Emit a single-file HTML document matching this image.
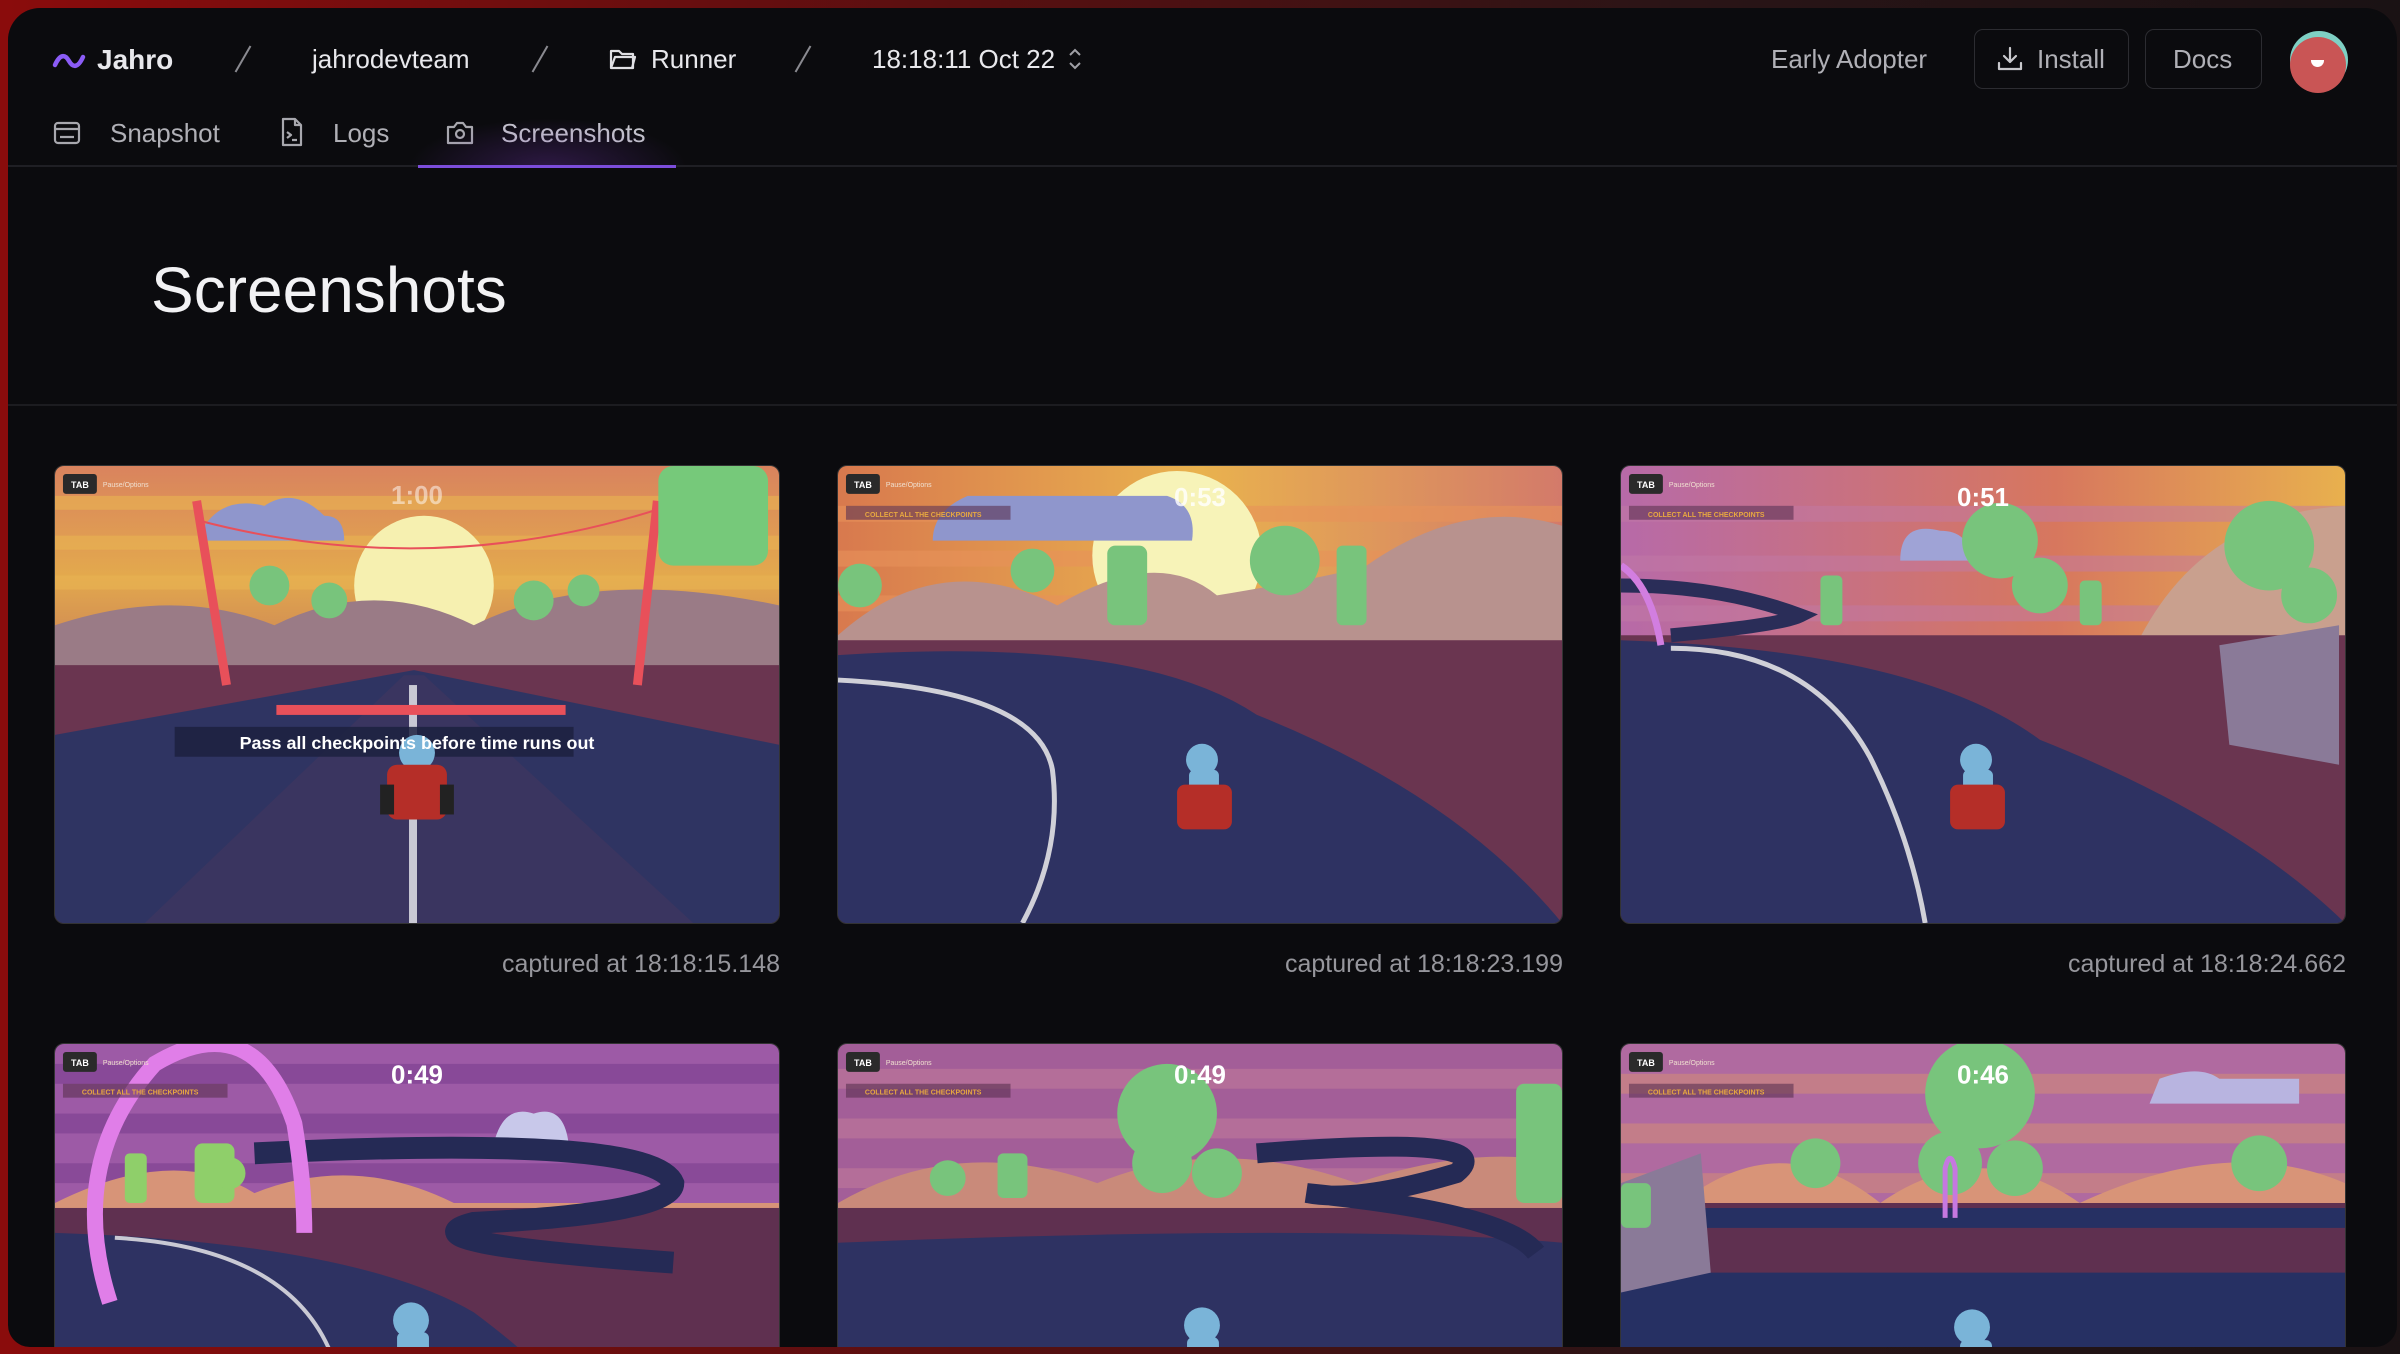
<!DOCTYPE html>
<html><head><meta charset="utf-8">
<style>
*{margin:0;padding:0;box-sizing:border-box}
html,body{width:2400px;height:1354px;overflow:hidden}
body{background:linear-gradient(90deg,#8a0c0c 0%,#5a0f10 40%,#2a1416 70%,#1a1214 100%);font-family:"Liberation Sans",sans-serif;position:relative}
.win{position:absolute;left:8px;top:8px;width:2389px;height:1339px;background:#0b0b0e;border-radius:32px 32px 22px 22px;overflow:hidden}
.t{position:absolute;color:#e8e8ec;font-size:26px;line-height:1;white-space:nowrap}
.g{color:#b0b0b6}
.sl{position:absolute;width:2px;height:30px;background:#8a8a90;transform:rotate(30deg)}
.btn{position:absolute;top:21px;height:60px;border:1.5px solid #2c2c31;border-radius:9px}
.hr{position:absolute;left:0;right:0;height:2px;background:#1f1f24}
.card{position:absolute;width:726px;height:459px;border-radius:10px;overflow:hidden;border:1px solid #333}
.card svg{display:block;width:100%;height:100%}
.cap{position:absolute;width:726px;text-align:right;color:#96969c;font-size:25px}
</style></head><body>
<div class="win">
<svg style="position:absolute;left:44px;top:43px" width="34" height="20" viewBox="0 0 34 20"><path d="M3 14 C8 3,13 3,17 10 S26 17,31 6" stroke="#8b5cf6" stroke-width="4.5" fill="none" stroke-linecap="round"/></svg>
<div class="t" style="left:89px;top:38px;font-weight:700;font-size:28px">Jahro</div>
<div class="sl" style="left:234px;top:36px"></div>
<div class="t" style="left:304px;top:38px">jahrodevteam</div>
<div class="sl" style="left:531px;top:36px"></div>
<svg style="position:absolute;left:601px;top:39px" width="28" height="24" viewBox="0 0 28 24" fill="none" stroke="#e0e0e4" stroke-width="2.2" stroke-linejoin="round"><path d="M2 4h8l3 3h11v14H2z"/><path d="M2 21l4-11h20l-3 11"/></svg>
<div class="t" style="left:643px;top:38px">Runner</div>
<div class="sl" style="left:794px;top:36px"></div>
<div class="t" style="left:864px;top:38px">18:18:11 Oct 22</div>
<svg style="position:absolute;left:1059px;top:38px" width="16" height="26" viewBox="0 0 16 26" fill="none" stroke="#a0a0a6" stroke-width="2"><path d="M3 9l5-5 5 5M3 17l5 5 5-5"/></svg>
<div class="t g" style="left:1763px;top:38px">Early Adopter</div>
<div class="btn" style="left:1966px;width:155px"></div>
<svg style="position:absolute;left:1988px;top:37px" width="28" height="28" viewBox="0 0 28 28" fill="none" stroke="#c8c8cc" stroke-width="2.2" stroke-linecap="round" stroke-linejoin="round"><path d="M14 3v14M8 11l6 6 6-6M3 18v6h22v-6"/></svg>
<div class="t g" style="left:2029px;top:38px">Install</div>
<div class="btn" style="left:2137px;width:117px"></div>
<div class="t g" style="left:2165px;top:38px">Docs</div>
<div style="position:absolute;left:2282px;top:23px;width:58px;height:58px;border-radius:50%;background:#7fd0c4"></div>
<div style="position:absolute;left:2282px;top:29px;width:56px;height:56px;border-radius:50%;background:#c95555"></div>
<div style="position:absolute;left:2303px;top:52px;width:13px;height:7px;border-radius:0 0 7px 7px;background:#fff"></div>
<svg style="position:absolute;left:45px;top:112px" width="28" height="26" viewBox="0 0 28 26" fill="none" stroke="#a8a8ae" stroke-width="2.2"><rect x="2" y="3" width="24" height="20" rx="3"/><path d="M2 9h24M7 17h14"/></svg>
<div class="t g" style="left:102px;top:112px">Snapshot</div>
<svg style="position:absolute;left:272px;top:109px" width="24" height="30" viewBox="0 0 24 30" fill="none" stroke="#a8a8ae" stroke-width="2.2" stroke-linejoin="round"><path d="M3 2h12l6 6v20H3z"/><path d="M15 2v6h6M7 15l4 3-4 3M12 23h5"/></svg>
<div class="t g" style="left:325px;top:112px">Logs</div>
<svg style="position:absolute;left:437px;top:111px" width="30" height="28" viewBox="0 0 30 28" fill="none" stroke="#a8a8ae" stroke-width="2.2" stroke-linejoin="round"><path d="M3 8h6l3-4h6l3 4h6v16H3z"/><circle cx="15" cy="15" r="4"/></svg>
<div class="t" style="left:493px;top:112px;color:#c4c4cc">Screenshots</div>
<div style="position:absolute;left:400px;top:110px;width:280px;height:50px;background:radial-gradient(ellipse at 50% 100%,rgba(110,50,170,.35),transparent 70%)"></div>
<div class="hr" style="top:157px"></div>
<div style="position:absolute;left:410px;top:157px;width:258px;height:3px;background:#7c4ddb"></div>
<div class="t" style="left:143px;top:250px;font-size:64px;color:#f2f2f4">Screenshots</div>
<div class="hr" style="top:396px;background:#1c1c20"></div>

<div class="card" style="left:46px;top:457px"><svg viewBox="0 0 726 459" preserveAspectRatio="none">
<defs><linearGradient id="s1" x1="0" y1="0" x2="0" y2="1"><stop offset="0" stop-color="#d9835e"/><stop offset=".5" stop-color="#e3a94d"/><stop offset="1" stop-color="#c47858"/></linearGradient></defs>
<rect width="726" height="220" fill="url(#s1)"/>
<g fill="#e9b452" opacity=".6"><rect y="30" width="726" height="14"/><rect y="70" width="726" height="14"/><rect y="110" width="726" height="14"/></g>
<circle cx="370" cy="120" r="70" fill="#f6f0b0"/>
<path d="M150 60q20-30 60-20q30-20 60 10q20 0 20 25h-140z" fill="#8f96cc"/>
<path d="M0 160q120-40 220 0q100-50 200 0q120-60 306-20v80H0z" fill="#9a7b86"/>
<rect y="200" width="726" height="259" fill="#6a3550"/>
<path d="M0 270L360 205L726 280V459H0z" fill="#2f3462"/>
<path d="M90 459L350 210h20L640 459z" fill="#3a3560"/>
<rect x="355" y="220" width="8" height="239" fill="#c9c9d4"/>
<rect x="222" y="240" width="290" height="10" fill="#e8505a"/>
<path d="M142 35l30 185M604 35l-20 185" stroke="#e8505a" stroke-width="9"/>
<path d="M145 55q230 60 455-10" stroke="#e8505a" stroke-width="2" fill="none"/>
<rect x="605" y="0" width="110" height="100" rx="15" fill="#76c97a"/>
<g fill="#78c47c"><circle cx="215" cy="120" r="20"/><circle cx="275" cy="135" r="18"/><circle cx="480" cy="135" r="20"/><circle cx="530" cy="125" r="16"/></g>
<text x="363" y="38" text-anchor="middle" fill="#fff" opacity=".5" font-size="26" font-weight="700" font-family="Liberation Sans">1:00</text>
<rect x="120" y="262" width="400" height="30" fill="#1c2140" opacity=".85"/>
<circle cx="363" cy="288" r="18" fill="#7ab4d8"/><rect x="333" y="300" width="60" height="55" rx="10" fill="#b52e28"/><rect x="326" y="320" width="14" height="30" fill="#222"/><rect x="386" y="320" width="14" height="30" fill="#222"/>
<text x="363" y="284" text-anchor="middle" fill="#fff" font-size="18" font-weight="700" font-family="Liberation Sans">Pass all checkpoints before time runs out</text>
<rect x="8" y="8" width="34" height="20" rx="3" fill="#2a2a2a"/><text x="25" y="22" text-anchor="middle" fill="#fff" font-size="9" font-family="Liberation Sans" font-weight="700">TAB</text><text x="48" y="21" fill="#f0e0d0" font-size="7" font-family="Liberation Sans">Pause/Options</text>
</svg></div>

<div class="card" style="left:829px;top:457px"><svg viewBox="0 0 726 459" preserveAspectRatio="none">
<defs><linearGradient id="s2" x1="0" y1="0" x2="1" y2="0"><stop offset="0" stop-color="#d8794e"/><stop offset=".5" stop-color="#e9b24e"/><stop offset="1" stop-color="#d37a6a"/></linearGradient></defs>
<rect width="726" height="200" fill="url(#s2)"/>
<g fill="#e8925a" opacity=".6"><rect y="40" width="726" height="16"/><rect y="85" width="726" height="16"/><rect y="130" width="726" height="16"/></g>
<circle cx="340" cy="90" r="85" fill="#f7f3b8"/>
<path d="M130 30h200q30 10 25 45h-260q0-30 35-45z" fill="#8f96cc"/>
<path d="M0 170q100-90 220-30q100-60 160-10q120-20 150-30q100-70 196-40v120H0z" fill="#b8928e"/>
<rect y="175" width="726" height="284" fill="#6a3550"/>
<path d="M0 190q300-20 420 60q200 80 306 209H0z" fill="#2e3262"/>
<path d="M0 215q200 10 215 90q10 80-30 154" stroke="#d0d0d8" stroke-width="5" fill="none"/>
<g fill="#78c47c"><circle cx="195" cy="105" r="22"/><rect x="270" y="80" width="40" height="80" rx="8"/><circle cx="448" cy="95" r="35"/><circle cx="22" cy="120" r="22"/><rect x="500" y="80" width="30" height="80" rx="6"/></g>
<circle cx="365" cy="295" r="16" fill="#7ab4d8"/><rect x="352" y="305" width="30" height="35" rx="6" fill="#7ab4d8"/><rect x="340" y="320" width="55" height="45" rx="8" fill="#b52e28"/>
<text x="363" y="40" text-anchor="middle" fill="#fff" opacity=".8" font-size="26" font-weight="700" font-family="Liberation Sans">0:53</text>
<rect x="8" y="8" width="34" height="20" rx="3" fill="#2a2a2a"/><text x="25" y="22" text-anchor="middle" fill="#fff" font-size="9" font-family="Liberation Sans" font-weight="700">TAB</text><text x="48" y="21" fill="#f0e0d0" font-size="7" font-family="Liberation Sans">Pause/Options</text>
<rect x="8" y="40" width="165" height="14" fill="#5a3050" opacity=".6"/><text x="27" y="51" fill="#e8a840" font-size="7" font-family="Liberation Sans" font-weight="700">COLLECT ALL THE CHECKPOINTS</text>
</svg></div>

<div class="card" style="left:1612px;top:457px"><svg viewBox="0 0 726 459" preserveAspectRatio="none">
<defs><linearGradient id="s3" x1="0" y1="0" x2="1" y2="0"><stop offset="0" stop-color="#b76aa8"/><stop offset=".6" stop-color="#d7775e"/><stop offset="1" stop-color="#e8b04e"/></linearGradient></defs>
<rect width="726" height="200" fill="url(#s3)"/>
<g fill="#c27aa6" opacity=".5"><rect y="40" width="726" height="16"/><rect y="90" width="726" height="16"/><rect y="140" width="726" height="16"/></g>
<path d="M280 95q0-40 40-30q30 0 30 30h-70z" fill="#9fa3d6"/>
<path d="M500 220q60-170 226-180v180z" fill="#c9a08e"/>
<rect y="170" width="726" height="289" fill="#6a3550"/>
<path d="M0 175q300 10 420 100q200 80 306 184H0z" fill="#2e3262"/>
<path d="M0 120q100 0 180 30q-20 10-130 20" stroke="#2a2d58" stroke-width="14" fill="none"/>
<path d="M50 183q140 0 200 110q40 80 55 166" stroke="#d0d0d8" stroke-width="5" fill="none"/>
<path d="M0 100q30 20 40 80" stroke="#d27ee0" stroke-width="7" fill="none"/>
<g fill="#78c47c"><circle cx="380" cy="75" r="38"/><circle cx="420" cy="120" r="28"/><circle cx="650" cy="80" r="45"/><circle cx="690" cy="130" r="28"/><rect x="200" y="110" width="22" height="50" rx="5"/><rect x="460" y="115" width="22" height="45" rx="5"/></g>
<path d="M600 180l120-20v140l-110-20z" fill="#8a7a98"/>
<circle cx="356" cy="295" r="16" fill="#7ab4d8"/><rect x="343" y="305" width="30" height="35" rx="6" fill="#7ab4d8"/><rect x="330" y="320" width="55" height="45" rx="8" fill="#b52e28"/>
<text x="363" y="40" text-anchor="middle" fill="#fff" font-size="26" font-weight="700" font-family="Liberation Sans">0:51</text>
<rect x="8" y="8" width="34" height="20" rx="3" fill="#2a2a2a"/><text x="25" y="22" text-anchor="middle" fill="#fff" font-size="9" font-family="Liberation Sans" font-weight="700">TAB</text><text x="48" y="21" fill="#f0e0d0" font-size="7" font-family="Liberation Sans">Pause/Options</text>
<rect x="8" y="40" width="165" height="14" fill="#5a3050" opacity=".6"/><text x="27" y="51" fill="#e8a840" font-size="7" font-family="Liberation Sans" font-weight="700">COLLECT ALL THE CHECKPOINTS</text>
</svg></div>

<div class="cap" style="left:46px;top:942px">captured at 18:18:15.148</div>
<div class="cap" style="left:829px;top:942px">captured at 18:18:23.199</div>
<div class="cap" style="left:1612px;top:942px">captured at 18:18:24.662</div>

<div class="card" style="left:46px;top:1035px;height:320px"><svg viewBox="0 0 726 320" preserveAspectRatio="none">
<rect width="726" height="170" fill="#9d5aa6"/>
<g fill="#7b3f8f" opacity=".6"><rect y="20" width="726" height="20"/><rect y="70" width="726" height="20"/><rect y="120" width="726" height="20"/></g>
<path d="M440 100q10-40 40-30q30-10 35 30h20v15h-100z" fill="#c8c8ea"/>
<path d="M0 160q120-60 200-10q100-40 200 10h326v30H0z" fill="#d79478"/>
<rect y="165" width="726" height="155" fill="#5f3050"/>
<path d="M200 110q400-20 420 30q0 30-200 40q-80 20 200 40" stroke="#252a55" stroke-width="22" fill="none"/>
<path d="M0 190q300 10 420 80q40 30 60 50H0z" fill="#2e3262"/>
<path d="M60 195q180 10 220 125" stroke="#c9c9d4" stroke-width="4" fill="none"/>
<path d="M55 260Q10 120 100 20Q200-40 240 80q10 60 10 110" stroke="#e07ee8" stroke-width="16" fill="none"/>
<g fill="#8fcf6a"><rect x="140" y="100" width="40" height="60" rx="8"/><rect x="70" y="110" width="22" height="50" rx="5"/><circle cx="175" cy="130" r="16"/></g>
<circle cx="357" cy="278" r="18" fill="#7ab4d8"/><rect x="343" y="290" width="32" height="30" rx="6" fill="#7ab4d8"/>
<text x="363" y="40" text-anchor="middle" fill="#fff" font-size="26" font-weight="700" font-family="Liberation Sans">0:49</text>
<rect x="8" y="8" width="34" height="20" rx="3" fill="#2a2a2a"/><text x="25" y="22" text-anchor="middle" fill="#fff" font-size="9" font-family="Liberation Sans" font-weight="700">TAB</text><text x="48" y="21" fill="#f0e0d0" font-size="7" font-family="Liberation Sans">Pause/Options</text>
<rect x="8" y="40" width="165" height="14" fill="#5a3050" opacity=".6"/><text x="27" y="51" fill="#e8a840" font-size="7" font-family="Liberation Sans" font-weight="700">COLLECT ALL THE CHECKPOINTS</text>
</svg></div>

<div class="card" style="left:829px;top:1035px;height:320px"><svg viewBox="0 0 726 320" preserveAspectRatio="none">
<rect width="726" height="170" fill="#a35e98"/>
<g fill="#c07a9a" opacity=".6"><rect y="25" width="726" height="20"/><rect y="75" width="726" height="20"/><rect y="125" width="726" height="20"/></g>
<path d="M0 160q120-70 260-20q120-50 260 0q120-40 206-20v50H0z" fill="#c98a7a"/>
<rect y="165" width="726" height="155" fill="#5f3050"/>
<path d="M0 200q500-20 726 0v120H0z" fill="#2e3262"/>
<path d="M420 110q250-20 200 20q-100 30-150 20q200 20 230 60" stroke="#252a55" stroke-width="20" fill="none"/>
<g fill="#78c47c"><circle cx="330" cy="70" r="50"/><circle cx="325" cy="120" r="30"/><circle cx="380" cy="130" r="25"/><circle cx="110" cy="135" r="18"/><rect x="160" y="110" width="30" height="45" rx="6"/><rect x="680" y="40" width="46" height="120" rx="8"/></g>
<circle cx="365" cy="283" r="18" fill="#7ab4d8"/><rect x="350" y="295" width="32" height="25" rx="6" fill="#7ab4d8"/>
<text x="363" y="40" text-anchor="middle" fill="#fff" font-size="26" font-weight="700" font-family="Liberation Sans">0:49</text>
<rect x="8" y="8" width="34" height="20" rx="3" fill="#2a2a2a"/><text x="25" y="22" text-anchor="middle" fill="#fff" font-size="9" font-family="Liberation Sans" font-weight="700">TAB</text><text x="48" y="21" fill="#f0e0d0" font-size="7" font-family="Liberation Sans">Pause/Options</text>
<rect x="8" y="40" width="165" height="14" fill="#5a3050" opacity=".6"/><text x="27" y="51" fill="#e8a840" font-size="7" font-family="Liberation Sans" font-weight="700">COLLECT ALL THE CHECKPOINTS</text>
</svg></div>

<div class="card" style="left:1612px;top:1035px;height:320px"><svg viewBox="0 0 726 320" preserveAspectRatio="none">
<rect width="726" height="170" fill="#b06aa0"/>
<g fill="#d08a7a" opacity=".6"><rect y="30" width="726" height="20"/><rect y="80" width="726" height="20"/><rect y="130" width="726" height="20"/></g>
<path d="M540 35q40-15 60 0h80v25h-150z" fill="#b8b4e0"/>
<path d="M60 160q100-80 200 0q100-70 200 0q150-70 266-20v50H0z" fill="#d89478"/>
<rect y="160" width="726" height="160" fill="#5f3050"/>
<path d="M0 165h726v20H0zM0 230h726v90H0z" fill="#263063"/>
<path d="M0 140l80-30 10 120-90 20z" fill="#8a7a98"/>
<g fill="#78c47c"><circle cx="360" cy="50" r="55"/><circle cx="330" cy="120" r="32"/><circle cx="395" cy="125" r="28"/><circle cx="195" cy="120" r="25"/><circle cx="640" cy="120" r="28"/><rect x="0" y="140" width="30" height="45" rx="6"/></g>
<path d="M325 175v-50q5-20 10 0v50" stroke="#c678e0" stroke-width="5" fill="none"/>
<circle cx="352" cy="285" r="18" fill="#7ab4d8"/><rect x="340" y="298" width="32" height="22" rx="6" fill="#7ab4d8"/>
<text x="363" y="40" text-anchor="middle" fill="#fff" font-size="26" font-weight="700" font-family="Liberation Sans">0:46</text>
<rect x="8" y="8" width="34" height="20" rx="3" fill="#2a2a2a"/><text x="25" y="22" text-anchor="middle" fill="#fff" font-size="9" font-family="Liberation Sans" font-weight="700">TAB</text><text x="48" y="21" fill="#f0e0d0" font-size="7" font-family="Liberation Sans">Pause/Options</text>
<rect x="8" y="40" width="165" height="14" fill="#5a3050" opacity=".6"/><text x="27" y="51" fill="#e8a840" font-size="7" font-family="Liberation Sans" font-weight="700">COLLECT ALL THE CHECKPOINTS</text>
</svg></div>
</div>
</body></html>
